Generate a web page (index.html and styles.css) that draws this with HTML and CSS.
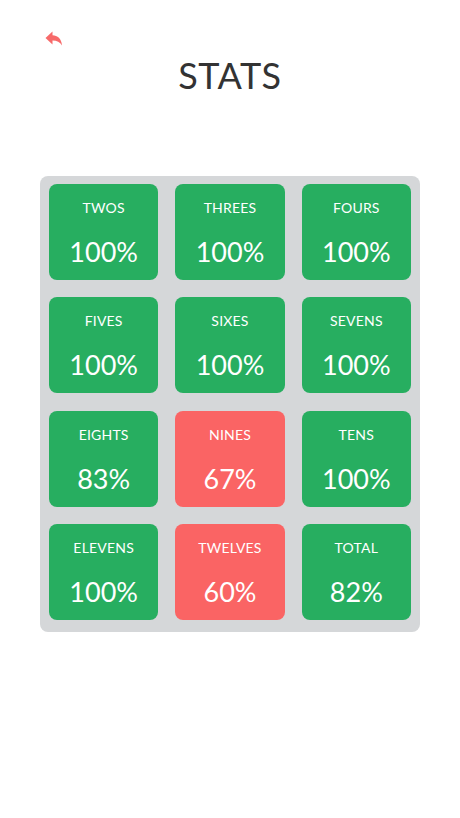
FILE: index.html
```html
<!DOCTYPE html>
<html>
<head>
<meta charset="utf-8">
<link rel="stylesheet" href="styles.css">
</head>
<body>
<div class="page">
  <header class="top">
    <button class="back" aria-label="Back">
      <svg width="18" height="16" viewBox="0 0 18 16">
        <path d="M0.5 7 L7.5 0.5 L7.5 4.2 C12.5 4.2 16.5 7.5 17 14.5 C15 11 12 9.6 7.5 9.6 L7.5 13.5 Z" fill="#f76a6a"/>
      </svg>
    </button>
  </header>
  <h1 class="title">STATS</h1>
  <div class="grid">
    <div class="tile good"><span class="label">TWOS</span><span class="pct">100%</span></div>
    <div class="tile good"><span class="label">THREES</span><span class="pct">100%</span></div>
    <div class="tile good"><span class="label">FOURS</span><span class="pct">100%</span></div>
    <div class="tile good"><span class="label">FIVES</span><span class="pct">100%</span></div>
    <div class="tile good"><span class="label">SIXES</span><span class="pct">100%</span></div>
    <div class="tile good"><span class="label">SEVENS</span><span class="pct">100%</span></div>
    <div class="tile good"><span class="label">EIGHTS</span><span class="pct">83%</span></div>
    <div class="tile bad"><span class="label">NINES</span><span class="pct">67%</span></div>
    <div class="tile good"><span class="label">TENS</span><span class="pct">100%</span></div>
    <div class="tile good"><span class="label">ELEVENS</span><span class="pct">100%</span></div>
    <div class="tile bad"><span class="label">TWELVES</span><span class="pct">60%</span></div>
    <div class="tile good"><span class="label">TOTAL</span><span class="pct">82%</span></div>
  </div>
</div>
</body>
</html>
```
FILE: styles.css
```css
html, body {
  margin: 0;
  padding: 0;
  background: #ffffff;
  font-family: Lato, "Open Sans", "Liberation Sans", sans-serif;
}
.page {
  width: 460px;
  height: 818px;
  display: flex;
  flex-direction: column;
  align-items: center;
}
.top {
  align-self: stretch;
  height: 32px;
  padding: 31px 0 0 45px;
  box-sizing: content-box;
}
.back {
  border: 0;
  background: none;
  padding: 0;
  margin: 0;
  display: block;
  cursor: pointer;
}
.back svg { display: block; }
.title {
  margin: -10px 0 0 0;
  font-size: 36px;
  font-weight: 400;
  letter-spacing: 0.5px;
  color: #333333;
  line-height: 44px;
}
.grid {
  margin-top: 79px;
  width: 380px;
  box-sizing: border-box;
  padding: 8px 9px 12px 9px;
  background: #d5d7d9;
  border-radius: 8px;
  display: grid;
  grid-template-columns: repeat(3, 1fr);
  grid-auto-rows: 96px;
  column-gap: 17px;
  row-gap: 17.33px;
}
.tile {
  border-radius: 8px;
  color: #ffffff;
  display: flex;
  flex-direction: column;
  align-items: center;
  padding-top: 16px;
  box-sizing: border-box;
}
.good { background: #27ae60; }
.bad { background: #fa6464; }
.label {
  font-size: 14px;
  line-height: 16px;
  letter-spacing: 0.2px;
}
.pct {
  margin-top: 19px;
  font-size: 27px;
  line-height: 34px;
  font-weight: 400;
}
```
